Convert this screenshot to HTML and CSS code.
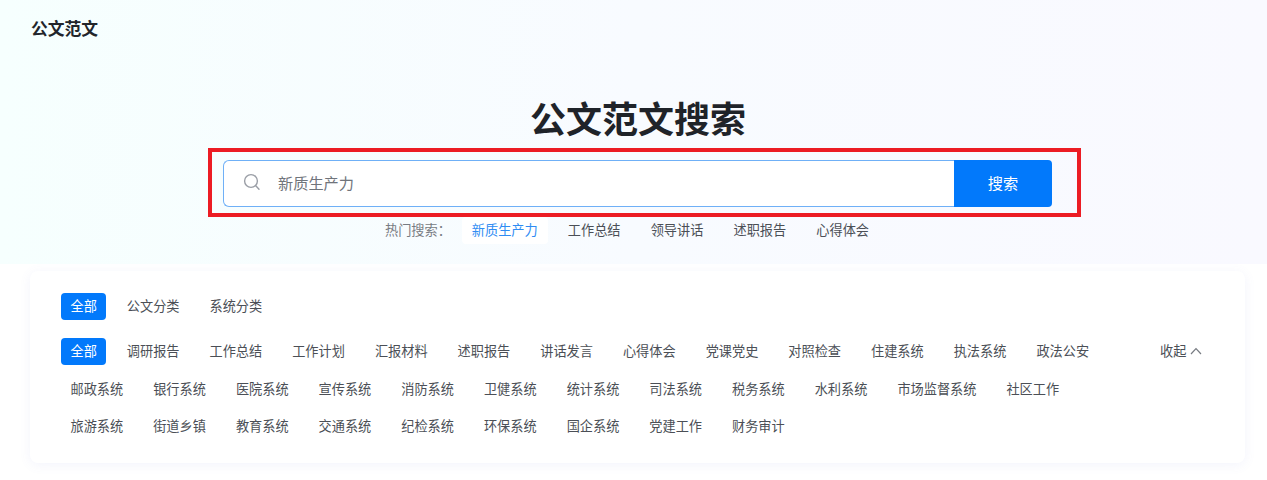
FILE: index.html
```html
<!DOCTYPE html>
<html lang="zh-CN">
<head>
<meta charset="utf-8">
<title>公文范文搜索</title>
<link rel="stylesheet" href="styles.css">
</head>
<body>
<section class="hero">
  <div class="logo">公文范文</div>
  <h1 class="title">公文范文搜索</h1>
  <div class="mark">
    <form class="search">
      <div class="field">
        <svg class="search-icon" viewBox="0 0 18 18" width="18" height="18" aria-hidden="true"><circle cx="8" cy="8" r="6.4"/><path d="M12.8 12.8 16 16.2"/></svg>
        <span class="query">新质生产力</span>
      </div>
      <button class="submit" type="button">搜索</button>
    </form>
  </div>
  <div class="hot">
    <span class="hot-label">热门搜索：</span>
    <a class="hot-item active">新质生产力</a>
    <a class="hot-item">工作总结</a>
    <a class="hot-item">领导讲话</a>
    <a class="hot-item">述职报告</a>
    <a class="hot-item">心得体会</a>
  </div>
</section>
<section class="card">
  <div class="tabs">
    <a class="chip on">全部</a><a class="chip">公文分类</a><a class="chip">系统分类</a>
  </div>
  <div class="filter">
    <div class="chips">
      <a class="chip on">全部</a><a class="chip">调研报告</a><a class="chip">工作总结</a><a class="chip">工作计划</a><a class="chip">汇报材料</a><a class="chip">述职报告</a><a class="chip">讲话发言</a><a class="chip">心得体会</a><a class="chip">党课党史</a><a class="chip">对照检查</a><a class="chip">住建系统</a><a class="chip">执法系统</a><a class="chip">政法公安</a>
      <a class="chip">邮政系统</a><a class="chip">银行系统</a><a class="chip">医院系统</a><a class="chip">宣传系统</a><a class="chip">消防系统</a><a class="chip">卫健系统</a><a class="chip">统计系统</a><a class="chip">司法系统</a><a class="chip">税务系统</a><a class="chip">水利系统</a><a class="chip">市场监督系统</a><a class="chip">社区工作</a>
      <a class="chip">旅游系统</a><a class="chip">街道乡镇</a><a class="chip">教育系统</a><a class="chip">交通系统</a><a class="chip">纪检系统</a><a class="chip">环保系统</a><a class="chip">国企系统</a><a class="chip">党建工作</a><a class="chip">财务审计</a>
    </div>
    <a class="toggle">收起<svg viewBox="0 0 12 8" width="12" height="8" aria-hidden="true"><path d="M1 7 6 1.6 11 7"/></svg></a>
  </div>
</section>
</body>
</html>
```

FILE: styles.css
```css
* { box-sizing: border-box; }
html, body { margin: 0; padding: 0; }
body {
  width: 1267px;
  height: 480px;
  overflow: hidden;
  background: #fff;
  color: #4b4f56;
  font-family: "Noto Sans CJK SC", "Noto Sans", sans-serif;
  font-size: 13.2px;
}
a { color: inherit; text-decoration: none; }

.hero {
  height: 264px;
  padding: 16px 0 0 31px;
  background: linear-gradient(90deg, #f6fffe 0%, #f8fbff 50%, #f9f9ff 100%);
}
.logo {
  height: 24px;
  font-size: 16.8px;
  line-height: 24px;
  font-weight: 700;
  color: #22252b;
}
.title {
  margin: 49px 0 3px 499px;
  width: 216px;
  height: 56px;
  font-size: 36px;
  line-height: 56px;
  font-weight: 700;
  white-space: nowrap;
  color: #1f2329;
}
.mark {
  margin: 0 0 0 177px;
  width: 873px;
  height: 69px;
  padding: 7.5px 25px 6px 11px;
  border: 4px solid #ec1c24;
}
.search {
  display: flex;
  height: 47.5px;
  margin: 0;
}
.field {
  flex: 1;
  display: flex;
  align-items: center;
  padding: 0 0 3px 19px;
  background: #fff;
  border: 1.5px solid #6fb0f7;
  border-right: 0;
  border-radius: 6px 0 0 6px;
}
.search-icon { fill: none; stroke: #9a9ea6; stroke-width: 1.4; stroke-linecap: round; }
.query {
  margin-left: 17px;
  font-size: 15.2px;
  color: #70747b;
}
.submit {
  width: 98px;
  border: 0;
  padding: 0 0 3px;
  border-radius: 0 4px 4px 0;
  background: #0279fb;
  color: #fff;
  font: inherit;
  font-size: 15.2px;
}
.hot {
  display: flex;
  align-items: center;
  height: 27px;
  margin-left: 354px;
  column-gap: 10.3px;
}
.hot-label { width: 66.6px; height: 27px; line-height: 25.6px; color: #777b82; white-space: nowrap; }
.hot-item { height: 27px; padding: 0 9.9px; line-height: 25.6px; white-space: nowrap; }
.hot-item.active { color: #2f8cf3; background: #fff; border-radius: 4px; }

.card {
  width: 1215px;
  height: 192px;
  margin: 7px 0 0 30px;
  padding: 22px 31px 0;
  background: #fff;
  border-radius: 8px;
  box-shadow: 0 2px 12px rgba(100, 110, 220, 0.08);
}
.tabs { display: flex; column-gap: 10.95px; margin-bottom: 17.8px; }
.filter { display: flex; align-items: flex-start; }
.chips {
  display: flex;
  flex-wrap: wrap;
  width: 1070px;
  column-gap: 10.95px;
  row-gap: 10.2px;
}
.chip {
  display: block;
  height: 27.3px;
  padding: 0 9.5px;
  line-height: 25.6px;
  border-radius: 4px;
  white-space: nowrap;
}
.chip.on { background: #0279fb; color: #fff; }
.toggle {
  display: flex;
  align-items: center;
  column-gap: 4px;
  height: 27.3px;
  padding-bottom: 2px;
  margin-left: 29px;
  white-space: nowrap;
}
.toggle svg { fill: none; stroke: #777b82; stroke-width: 1.2; }
```
